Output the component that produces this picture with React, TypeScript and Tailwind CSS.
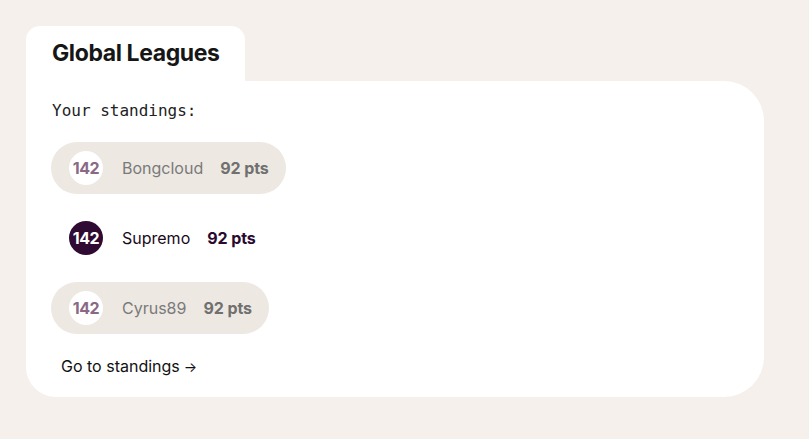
import React from "react";

const rows = [
  { rank: 142, name: "Bongcloud", pts: "92 pts", me: false },
  { rank: 142, name: "Supremo", pts: "92 pts", me: true },
  { rank: 142, name: "Cyrus89", pts: "92 pts", me: false },
];

export default function App() {
  return (
    <div className="w-[809px] h-[439px] bg-[#f5f0ec] pt-[26px] pl-[26px]" style={{ fontFamily: "Inter, 'Liberation Sans', sans-serif" }}>
      <div className="w-[738px]">
        <div className="w-[219px] h-[55px] bg-white rounded-t-[14px] pl-[26px] pt-[11px]">
          <h1 className="text-[23px] font-bold tracking-[-0.4px] text-[#161616] leading-[32px]">Global Leagues</h1>
        </div>
        <div className="bg-white rounded-tr-[40px] rounded-br-[40px] rounded-bl-[30px] h-[316px] pl-[25px] pt-[19px]">
          <p className="ml-[1px] text-[16px] leading-[22px] text-[#222]" style={{ fontFamily: "'DejaVu Sans Mono', monospace" }}>Your standings:</p>
          <div className="mt-[20px] flex flex-col gap-[18px] items-start">
            {rows.map((r, i) => (
              <div
                key={i}
                className={`h-[52px] flex items-center gap-[18px] pl-[18px] pr-[17px] rounded-full ${r.me ? "" : "bg-[#ede8e2]"}`}
              >
                <div
                  className={`w-[34px] h-[34px] rounded-full flex items-center justify-center text-[16px] font-bold tracking-[-0.5px] ${r.me ? "bg-[#2f0a33] text-white" : "bg-white text-[#8a6886]"}`}
                >
                  {r.rank}
                </div>
                <span className={`ml-[1px] text-[16px] ${r.me ? "text-[#1a0a1c]" : "text-[#7a7a7a]"}`}>{r.name}</span>
                <span className={`-ml-[1px] text-[16px] font-bold tracking-[-0.1px] ${r.me ? "text-[#2a0a2e]" : "text-[#707070]"}`}>{r.pts}</span>
              </div>
            ))}
          </div>
          <a className="mt-[20px] ml-[10px] inline-flex items-center gap-[4px] text-[16px] text-[#111]">
            Go to standings
            <span className="text-[14px]">→</span>
          </a>
        </div>
      </div>
    </div>
  );
}
